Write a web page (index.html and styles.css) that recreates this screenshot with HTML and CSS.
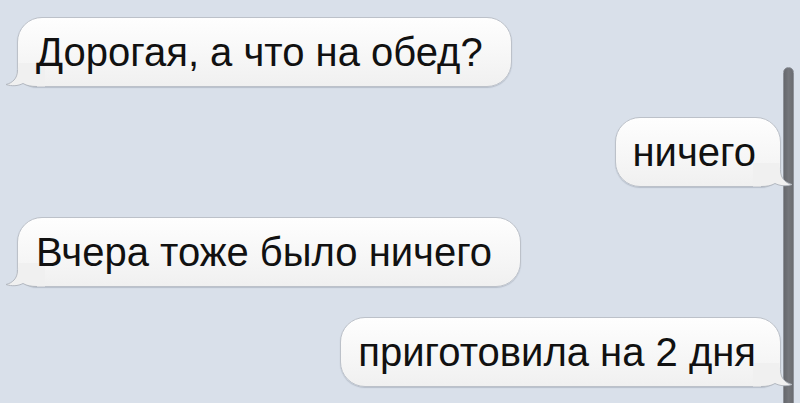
FILE: index.html
```html
<!DOCTYPE html>
<html lang="ru">
<head>
<meta charset="utf-8">
<title>Сообщения</title>
<link rel="stylesheet" href="styles.css">
</head>
<body>
<main class="chat">
  <div class="bubble in">
    <span class="text">Дорогая, а что на обед?</span>
    <svg class="tail" width="40" height="30" viewBox="0 0 40 30"><path class="tail-fill" d="M12,14 C12,22 7,26 1,27.5 C7,29.5 13,29 18,26.5 C22,28.8 26,29.5 32,29.5 L40,29.5 L40,6 L13.5,6 L13.5,12 Z"/><path class="tail-line" d="M12.5,13 C12.5,22 7,26 1,27.5 C7,29.5 13,29 18,26.5 C22,28.8 26,29.5 32,29.5"/></svg>
  </div>
  <div class="bubble out">
    <span class="text">ничего</span>
    <svg class="tail" width="40" height="30" viewBox="0 0 40 30"><path class="tail-fill" d="M12,14 C12,22 7,26 1,27.5 C7,29.5 13,29 18,26.5 C22,28.8 26,29.5 32,29.5 L40,29.5 L40,6 L13.5,6 L13.5,12 Z"/><path class="tail-line" d="M12.5,13 C12.5,22 7,26 1,27.5 C7,29.5 13,29 18,26.5 C22,28.8 26,29.5 32,29.5"/></svg>
  </div>
  <div class="bubble in">
    <span class="text">Вчера тоже было ничего</span>
    <svg class="tail" width="40" height="30" viewBox="0 0 40 30"><path class="tail-fill" d="M12,14 C12,22 7,26 1,27.5 C7,29.5 13,29 18,26.5 C22,28.8 26,29.5 32,29.5 L40,29.5 L40,6 L13.5,6 L13.5,12 Z"/><path class="tail-line" d="M12.5,13 C12.5,22 7,26 1,27.5 C7,29.5 13,29 18,26.5 C22,28.8 26,29.5 32,29.5"/></svg>
  </div>
  <div class="bubble out">
    <span class="text">приготовила на 2 дня</span>
    <svg class="tail" width="40" height="30" viewBox="0 0 40 30"><path class="tail-fill" d="M12,14 C12,22 7,26 1,27.5 C7,29.5 13,29 18,26.5 C22,28.8 26,29.5 32,29.5 L40,29.5 L40,6 L13.5,6 L13.5,12 Z"/><path class="tail-line" d="M12.5,13 C12.5,22 7,26 1,27.5 C7,29.5 13,29 18,26.5 C22,28.8 26,29.5 32,29.5"/></svg>
  </div>
</main>
<div class="scrollbar"></div>
</body>
</html>
```
FILE: styles.css
```css
html, body {
  margin: 0;
  padding: 0;
  height: 100%;
  overflow: hidden;
}
body {
  background: #d9e0ea;
  font-family: "Liberation Sans", Arial, sans-serif;
}
.chat {
  display: flex;
  flex-direction: column;
  gap: 30px;
  padding: 17px 19px 0 17px;
}
.bubble {
  position: relative;
  box-sizing: border-box;
  height: 70px;
  line-height: 68px;
  font-size: 40px;
  color: #111;
  background: linear-gradient(#fefefe, #f6f6f6 60%, #f0f0f0);
  border: 1px solid #bcc1c9;
  border-radius: 25px;
  box-shadow: 0 1px 1px rgba(80, 90, 110, 0.25);
  white-space: nowrap;
}
.bubble.in {
  align-self: flex-start;
  padding: 0 28px 0 18px;
  border-bottom-left-radius: 20px;
}
.bubble.out {
  align-self: flex-end;
  padding: 0 24px 0 17px;
  border-bottom-right-radius: 20px;
}
.text {
  position: relative;
  z-index: 2;
}
.tail {
  position: absolute;
  bottom: -1px;
  z-index: 1;
  overflow: visible;
}
.bubble.in .tail {
  left: -13px;
}
.bubble.out .tail {
  right: -13px;
  transform: scaleX(-1);
}
.tail-fill {
  fill: #f0f0f0;
}
.tail-line {
  fill: none;
  stroke: #b3b8c0;
  stroke-width: 1;
}
.scrollbar {
  position: absolute;
  left: 783px;
  top: 67px;
  width: 11px;
  height: 345px;
  border-radius: 6px 6px 0 0;
  background: linear-gradient(90deg, #66686d, #74767b 50%, #6a6c71);
  border: 1px solid #8c9098;
  box-sizing: border-box;
}
```
